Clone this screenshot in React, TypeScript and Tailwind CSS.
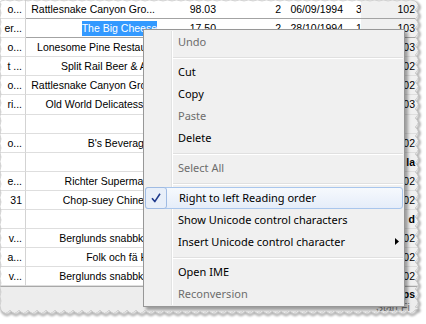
import React from "react";

type GridRow = {
  c1: string;
  c2: string;
  c3: string;
  c4: string;
  c5: string;
  c6: string;
  c7: string;
  bold?: boolean;
};

// cells that sit fully under the context menu are left blank
const hidden = { c3: "", c4: "", c5: "", c6: "" };

const rows: GridRow[] = [
  { c1: "o...", c2: "Rattlesnake Canyon Gro...", c3: "98.03", c4: "2", c5: "06/09/1994", c6: "3", c7: "102" },
  { c1: "er...", c2: "The Big Cheese", c3: "17.50", c4: "2", c5: "28/10/1994", c6: "1", c7: "103" },
  { c1: "o...", c2: "Lonesome Pine Restau...", ...hidden, c7: "103" },
  { c1: "t ...", c2: "Split Rail Beer & Ale", ...hidden, c7: "102" },
  { c1: "o...", c2: "Rattlesnake Canyon Gro...", ...hidden, c7: "102" },
  { c1: "ri...", c2: "Old World Delicatessen", ...hidden, c7: "103" },
  { c1: "", c2: "", ...hidden, c7: "" },
  { c1: "o...", c2: "B's Beverages", ...hidden, c7: "102" },
  { c1: "", c2: "", ...hidden, c7: "la", bold: true },
  { c1: "e...", c2: "Richter Supermarkt", ...hidden, c7: "102" },
  { c1: "31", c2: "Chop-suey Chinese", ...hidden, c7: "102" },
  { c1: "", c2: "", ...hidden, c7: "d", bold: true },
  { c1: "v...", c2: "Berglunds snabbköp", ...hidden, c7: "102" },
  { c1: "a...", c2: "Folk och fä HB", ...hidden, c7: "102" },
  { c1: "v...", c2: "Berglunds snabbköp", ...hidden, c7: "102" },
];

type MenuEntry =
  | { label: string; disabled?: boolean; checked?: boolean; hot?: boolean; sub?: boolean }
  | "sep";

const menu: MenuEntry[] = [
  { label: "Undo", disabled: true },
  "sep",
  { label: "Cut" },
  { label: "Copy" },
  { label: "Paste", disabled: true },
  { label: "Delete" },
  "sep",
  { label: "Select All", disabled: true },
  "sep",
  { label: "Right to left Reading order", checked: true, hot: true },
  { label: "Show Unicode control characters" },
  { label: "Insert Unicode control character", sub: true },
  "sep",
  { label: "Open IME" },
  { label: "Reconversion", disabled: true },
];

const Row = ({ row, index }: { row: GridRow; index: number }) => {
  const edit = index <= 1;
  const line = edit ? "border-b-[#a3a3a3]" : "border-b-[#dedede]";
  return (
    <div className="flex h-[19.1px] leading-[18px]">
      <div className="w-[26px] shrink-0 overflow-hidden whitespace-nowrap border-b border-r border-b-[#dedede] border-r-[#d3d3d3] pr-[3px] text-right">
        {row.c1}
      </div>
      <div className={`w-[132px] shrink-0 overflow-hidden whitespace-nowrap border-b text-right ${line} ${index === 1 ? "pr-[1px]" : "pr-[3px]"}`}>
        {index === 1 ? (
          <span className="inline-block bg-[#3399ff] leading-[15px] text-white">{row.c2}</span>
        ) : (
          row.c2
        )}
      </div>
      <div className={`w-[60px] shrink-0 border-b pr-[2px] text-right ${line}`}>{row.c3}</div>
      <div className={`w-[65px] shrink-0 border-b pr-[2px] text-right ${line}`}>{row.c4}</div>
      <div className={`w-[62px] shrink-0 border-b pr-[2px] text-right ${line}`}>{row.c5}</div>
      <div className={`w-[16px] shrink-0 overflow-hidden whitespace-nowrap border-b pl-[11px] ${line}`}>{row.c6}</div>
      <div className={`w-[56px] shrink-0 border-b bg-[#f0f0f0] pr-[2px] text-right ${line} ${row.bold ? "font-bold" : ""}`}>
        {row.c7}
      </div>
    </div>
  );
};

const Check = () => (
  <svg width="12" height="12" viewBox="0 0 12 12">
    <path d="M2 6.2 L4.8 9.6 L10 1.8" fill="none" stroke="#1f3a8c" strokeWidth="1.6" strokeLinejoin="round" />
  </svg>
);

const ContextMenu = () => (
  <div className="absolute left-[143px] top-[29px] w-[262px] border border-[#979797] bg-[#f0f0f0] p-px font-['Segoe_UI','Noto_Sans',sans-serif] text-[11px] shadow-[3px_3px_3px_rgba(0,0,0,0.35)]">
    <div className="relative">
      <div className="absolute bottom-0 left-[26px] top-0 w-px bg-[#e2e3e3]" />
      <div className="absolute bottom-0 left-[27px] top-0 w-px bg-white" />
      {menu.map((m, i) =>
        m === "sep" ? (
          <div key={i} className="relative h-[8px]">
            <div className="absolute left-[28px] right-0 top-[4px] h-px bg-[#e0e0e0]" />
            <div className="absolute left-[28px] right-0 top-[5px] h-px bg-white" />
          </div>
        ) : (
          <div
            key={i}
            className={`relative flex h-[22px] items-center pl-[33px] ${
              m.hot
                ? "rounded-[3px] border border-[#a9c6ec] bg-gradient-to-b from-[#f6f9fd] to-[#e5edf9] pl-[32px]"
                : ""
            } ${m.disabled ? "text-[#6d6d6d]" : "text-black"}`}
          >
            {m.checked && (
              <div className="absolute left-[-1px] top-[-1px] flex h-[22px] w-[22px] items-center justify-center rounded-[3px] border border-[#9fbbe3] bg-[#e8eff9]">
                <Check />
              </div>
            )}
            <span className="whitespace-nowrap">{m.label}</span>
            {m.sub && (
              <svg className="absolute right-[4px] top-[7px]" width="4" height="7" viewBox="0 0 4 7">
                <path d="M0 0 L4 3.5 L0 7 Z" fill="#000" />
              </svg>
            )}
          </div>
        )
      )}
    </div>
  </div>
);

const paper = (() => {
  const L = 1, T = 1, R = 415, B = 310, s = 9;
  let d = `M${L} ${T}`;
  for (let x = L; x < R; x += s) {
    const n = Math.min(x + s, R);
    d += ` Q${(x + n) / 2} ${T - 2} ${n} ${T}`;
  }
  for (let y = T; y < B; y += s) {
    const n = Math.min(y + s, B);
    d += ` Q${R + 6} ${(y + n) / 2} ${R} ${n}`;
  }
  for (let x = R; x > L; x -= s) {
    const n = Math.max(x - s, L);
    d += ` Q${(x + n) / 2} ${B + 6} ${n} ${B}`;
  }
  for (let y = B; y > T; y -= s) {
    const n = Math.max(y - s, T);
    d += ` Q${L - 2} ${(y + n) / 2} ${L} ${n}`;
  }
  return d + " Z";
})();

const outside = `M-10 -10 H436 V334 H-10 Z ${paper}`;

const TornEdge = () => (
  <svg className="pointer-events-none absolute inset-0" width="426" height="324" viewBox="0 0 426 324">
    <defs>
      <clipPath id="outside">
        <path d={outside} clipRule="evenodd" />
      </clipPath>
      <filter id="soft" x="-5%" y="-5%" width="110%" height="110%">
        <feGaussianBlur stdDeviation="1.2" />
      </filter>
    </defs>
    <path d={outside} fill="#fff" fillRule="evenodd" />
    <g clipPath="url(#outside)">
      <path d={paper} fill="none" stroke="rgba(0,0,0,0.35)" strokeWidth="2.5" transform="translate(1.5 2)" filter="url(#soft)" />
    </g>
    <path d={paper} fill="none" stroke="#c4c4c4" strokeWidth="0.7" />
  </svg>
);

export default function App() {
  return (
    <div className="relative h-[324px] w-[426px] overflow-hidden bg-white">
      <div className="relative h-[312px] w-[418px] overflow-hidden bg-white font-['Liberation_Sans',Arial,sans-serif] text-[10.5px] text-black">
        {rows.map((r, i) => (
          <Row key={i} row={r} index={i} />
        ))}
        <div className="h-[40px] border-t border-[#a8a8a8] bg-[#ededed] text-right">
          <div className="h-[14px] pr-[3px] font-bold leading-[14px]">ps</div>
          <div className="whitespace-nowrap pl-[376px] text-left leading-[13px] text-[#7a7a7a]">Start Fi</div>
        </div>
        <ContextMenu />
      </div>
      <TornEdge />
    </div>
  );
}
